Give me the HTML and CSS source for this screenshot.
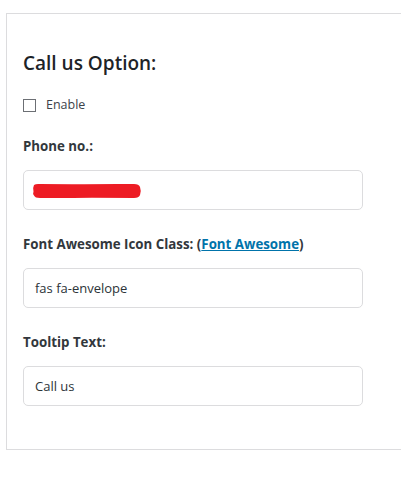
FILE: index.html
```html
<!DOCTYPE html>
<html>
<head>
<meta charset="utf-8">
<link rel="stylesheet" href="styles.css">
</head>
<body>
<div class="card">
  <h2 class="title">Call us Option:</h2>
  <label class="check-row"><span class="checkbox"></span><span class="check-text">Enable</span></label>
  <div class="field">
    <div class="label">Phone no.:</div>
    <div class="input">
      <svg class="redact" width="110" height="16" viewBox="0 0 110 16"><path d="M2 2 Q4 0.5 8 1 L40 1.2 Q80 0.8 102 1 Q107 1 108 4 Q109.5 8 108 12 Q107 15 102 15 L60 14.8 Q30 15.2 8 15 Q3 15 2 12.5 Q0.5 11 1.5 8.5 Q0.5 5 2 2 Z" fill="#ed1c24"/></svg>
    </div>
  </div>
  <div class="field">
    <div class="label">Font Awesome Icon Class: (<a class="link" href="#">Font Awesome</a>)</div>
    <div class="input">fas fa-envelope</div>
  </div>
  <div class="field">
    <div class="label">Tooltip Text:</div>
    <div class="input">Call us</div>
  </div>
</div>
</body>
</html>
```
FILE: styles.css
```css
html, body {
  margin: 0;
  padding: 0;
  background: #ffffff;
  overflow: hidden;
}
body {
  font-family: "Open Sans", "Noto Sans", sans-serif;
  color: #3c434a;
}
.card {
  margin: 13px 0 0 6px;
  border: 1px solid #dcdcde;
  border-right: none;
  padding: 37px 0 43px 16px;
  display: flex;
  flex-direction: column;
}
.title {
  margin: 0;
  font-size: 19px;
  line-height: 24px;
  font-weight: 600;
  color: #1d2327;
}
.check-row {
  display: flex;
  align-items: center;
  margin-top: 21px;
  height: 18px;
}
.checkbox {
  width: 11px;
  height: 11px;
  border: 1px solid #6c6f74;
  background: #fff;
}
.check-text {
  margin-left: 10px;
  font-size: 12.5px;
  line-height: 18px;
  color: #3c434a;
}
.field {
  display: flex;
  flex-direction: column;
  margin-top: 23px;
}
.field + .field {
  margin-top: 25px;
}
.label {
  font-size: 13.3px;
  line-height: 18px;
  font-weight: 700;
  color: #32373c;
}
.link {
  color: #0073aa;
  text-decoration: underline;
}
.input {
  margin-top: 15px;
  width: 340px;
  height: 40px;
  box-sizing: border-box;
  border: 1px solid #dcdcde;
  border-radius: 5px;
  padding: 0 11px;
  display: flex;
  align-items: center;
  font-size: 13px;
  color: #2c3338;
}
.redact {
  margin-left: -3px;
  margin-top: 2px;
  display: block;
}
```
